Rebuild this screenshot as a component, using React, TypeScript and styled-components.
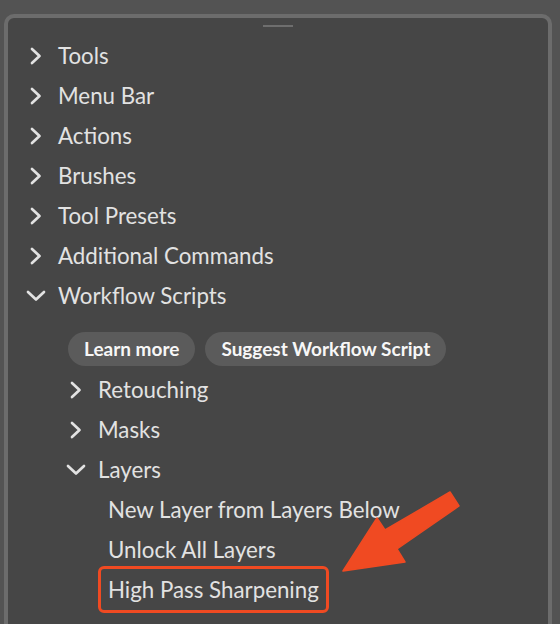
import React from "react";
import styled, { createGlobalStyle } from "styled-components";

const Global = createGlobalStyle`
  html, body { margin: 0; padding: 0; background: #535353; }
  body { font-family: Lato, "Noto Sans", "Liberation Sans", sans-serif; overflow: hidden; }
`;

const Page = styled.div`
  width: 560px;
  height: 624px;
  overflow: hidden;
  position: relative;
  padding: 14px 0 0 4px;
  box-sizing: border-box;
`;

const Panel = styled.div`
  width: 548px;
  min-height: 700px;
  box-sizing: border-box;
  border: 4px solid #6c6c6c;
  border-radius: 10px;
  background: #464646;
  padding-top: 7px;
  display: flex;
  flex-direction: column;
`;

const Grip = styled.div`
  align-self: center;
  width: 30px;
  height: 2px;
  background: #6e6e6e;
  margin-bottom: 9px;
`;

const Row = styled.div<{ $indent: number }>`
  height: 40px;
  box-sizing: border-box;
  padding-bottom: 2px;
  display: flex;
  align-items: center;
  padding-left: ${(p) => p.$indent}px;
  color: #e2e2e2;
  font-size: 22.3px;
`;

const IconBox = styled.span`
  width: 20px;
  height: 20px;
  display: flex;
  align-items: center;
  justify-content: center;
  margin-right: 12px;
  margin-top: 2px;
`;

const Label = styled.span<{ $highlight?: boolean }>`
  position: relative;
  white-space: nowrap;
  ${(p) =>
    p.$highlight
      ? `&::after {
    content: "";
    position: absolute;
    left: -10px;
    right: -10px;
    top: -10px;
    bottom: -10px;
    border: 3px solid #f04a22;
    border-radius: 6px;
  }`
      : ""}
`;

const ButtonRow = styled.div`
  display: flex;
  gap: 10px;
  padding-left: 60px;
  margin: 16px 0 4px;
`;

const Pill = styled.button`
  height: 34px;
  border: none;
  border-radius: 17px;
  background: #5b5b5b;
  color: #f7f7f7;
  font-family: Lato, "Noto Sans", "Liberation Sans", sans-serif;
  font-weight: 700;
  font-size: 19px;
  padding: 0 16px 1px;
  cursor: pointer;
`;

const Arrow = styled.svg`
  position: absolute;
  left: 0;
  top: 0;
  pointer-events: none;
`;

const ChevronRight = () => (
  <svg width="12" height="18" viewBox="0 0 12 18">
    <polyline points="2,2 9.5,9 2,16" fill="none" stroke="#e2e2e2" strokeWidth="2.7" strokeLinecap="round" strokeLinejoin="round" />
  </svg>
);

const ChevronDown = () => (
  <svg width="20" height="12" viewBox="0 0 20 12">
    <polyline points="2,2 10,9.5 18,2" fill="none" stroke="#e2e2e2" strokeWidth="2.7" strokeLinecap="round" strokeLinejoin="round" />
  </svg>
);

type Item = { label: string; level: number; state: "open" | "closed" | "leaf"; highlight?: boolean };

const top: Item[] = [
  { label: "Tools", level: 0, state: "closed" },
  { label: "Menu Bar", level: 0, state: "closed" },
  { label: "Actions", level: 0, state: "closed" },
  { label: "Brushes", level: 0, state: "closed" },
  { label: "Tool Presets", level: 0, state: "closed" },
  { label: "Additional Commands", level: 0, state: "closed" },
  { label: "Workflow Scripts", level: 0, state: "open" },
];

const sub: Item[] = [
  { label: "Retouching", level: 1, state: "closed" },
  { label: "Masks", level: 1, state: "closed" },
  { label: "Layers", level: 1, state: "open" },
  { label: "New Layer from Layers Below", level: 2, state: "leaf" },
  { label: "Unlock All Layers", level: 2, state: "leaf" },
  { label: "High Pass Sharpening", level: 2, state: "leaf", highlight: true },
];

const TreeRow = ({ item }: { item: Item }) => (
  <Row $indent={item.state === "leaf" ? 20 + item.level * 40 : 18 + item.level * 40}>
    {item.state !== "leaf" && (
      <IconBox>{item.state === "open" ? <ChevronDown /> : <ChevronRight />}</IconBox>
    )}
    <Label $highlight={item.highlight}>{item.label}</Label>
  </Row>
);

export default function App() {
  return (
    <Page>
      <Global />
      <Panel>
        <Grip />
        {top.map((it) => (
          <TreeRow key={it.label} item={it} />
        ))}
        <ButtonRow>
          <Pill>Learn more</Pill>
          <Pill>Suggest Workflow Script</Pill>
        </ButtonRow>
        {sub.map((it) => (
          <TreeRow key={it.label} item={it} />
        ))}
      </Panel>
      <Arrow width="560" height="624" viewBox="0 0 560 624">
        <polygon
          points="450,492 385,530 377,518 343,571 405,562 397,549 459,506"
          fill="#f04a22"
          stroke="#f04a22"
          strokeWidth="1.5"
          strokeLinejoin="round"
        />
      </Arrow>
    </Page>
  );
}
